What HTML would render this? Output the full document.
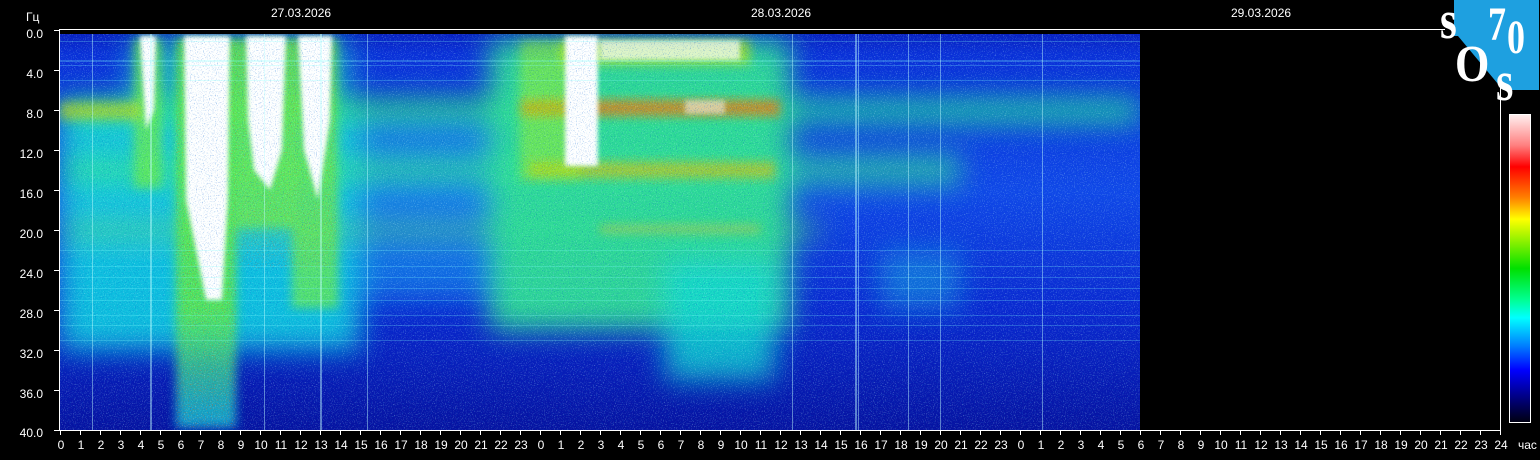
<!DOCTYPE html>
<html><head><meta charset="utf-8"><style>
html,body{margin:0;padding:0;background:#000;width:1540px;height:460px;overflow:hidden}
svg{display:block}
text{font-family:"Liberation Sans",sans-serif;fill:#fff}
.lg{font-family:"Liberation Serif",serif;font-weight:bold;fill:#fff}
</style></head><body>
<svg width="1540" height="460" viewBox="0 0 1540 460" xmlns="http://www.w3.org/2000/svg">
<defs>
<filter id="b2" x="-50%" y="-50%" width="200%" height="200%"><feGaussianBlur stdDeviation="2"/></filter>
<filter id="b5" x="-50%" y="-50%" width="200%" height="200%"><feGaussianBlur stdDeviation="5"/></filter>
<filter id="b12" x="-20%" y="-20%" width="140%" height="140%"><feGaussianBlur stdDeviation="14"/></filter>
<filter id="nz" x="0" y="0" width="100%" height="100%">
<feTurbulence type="fractalNoise" baseFrequency="0.9" numOctaves="1" seed="3"/>
<feColorMatrix type="matrix" values="0 0 0 0 0.6  0 0 0 0 1  0 0 0 0 1  4 0 0 0 -2.2"/>
</filter>
<filter id="nz2" x="0" y="0" width="100%" height="100%">
<feTurbulence type="fractalNoise" baseFrequency="0.85" numOctaves="1" seed="9"/>
<feColorMatrix type="matrix" values="0 0 0 0 0  0 0 0 0 0.1  0 0 0 0 0.6  4 0 0 0 -2.2"/>
</filter>
<filter id="nzr" x="0" y="0" width="100%" height="100%">
<feTurbulence type="fractalNoise" baseFrequency="0.95" numOctaves="1" seed="5"/>
<feColorMatrix type="matrix" values="0 0 0 0 0.9  0 0 0 0 0.1  0 0 0 0 0  5 0 0 0 -3"/>
</filter>
<clipPath id="pc"><rect x="60" y="34" width="1080" height="396"/></clipPath>
<linearGradient id="bg" x1="0" y1="0" x2="0" y2="1">
<stop offset="0" stop-color="#0820c0"/><stop offset="0.05" stop-color="#0a30d8"/>
<stop offset="0.4" stop-color="#1048e8"/><stop offset="0.7" stop-color="#0a28d0"/><stop offset="1" stop-color="#0612a0"/>
</linearGradient>
<linearGradient id="colg" x1="0" y1="0" x2="0" y2="1">
<stop offset="0" stop-color="#60f040"/><stop offset="0.7" stop-color="#60f040"/><stop offset="1" stop-color="#10c0e0"/>
</linearGradient>
<linearGradient id="cb" x1="0" y1="0" x2="0" y2="1">
<stop offset="0" stop-color="#fff0f0"/><stop offset="0.1" stop-color="#ff8080"/><stop offset="0.17" stop-color="#ff0000"/>
<stop offset="0.27" stop-color="#ff8000"/><stop offset="0.34" stop-color="#ffff00"/><stop offset="0.5" stop-color="#00e000"/>
<stop offset="0.6" stop-color="#00ff90"/><stop offset="0.66" stop-color="#00ffff"/><stop offset="0.75" stop-color="#0080ff"/>
<stop offset="0.83" stop-color="#0000ff"/><stop offset="0.92" stop-color="#000080"/><stop offset="1" stop-color="#000010"/>
</linearGradient>
</defs>
<g clip-path="url(#pc)">
<rect x="60" y="34" width="1080" height="396" fill="url(#bg)"/>
<g filter="url(#b12)">
<rect x="360" y="120" width="140" height="180" fill="#10a8f0" opacity="0.5"/>
<rect x="60" y="100" width="300" height="250" fill="#10d8e0" opacity="0.85"/>
<rect x="60" y="100" width="1080" height="22" fill="#30f070" opacity="0.85"/>
<rect x="800" y="100" width="340" height="22" fill="#20d0b0" opacity="0.6"/>
<rect x="60" y="155" width="900" height="30" fill="#30e890" opacity="0.7"/>
<rect x="60" y="222" width="760" height="16" fill="#50e060" opacity="0.6"/>
<rect x="490" y="40" width="300" height="290" fill="#30e890" opacity="0.9"/>
<rect x="665" y="260" width="110" height="120" fill="#10d8d0" opacity="0.8"/>
<rect x="880" y="250" width="80" height="60" fill="#10b0e0" opacity="0.5"/>
<rect x="130" y="40" width="220" height="60" fill="#20d0c0" opacity="0.7"/>
</g>
<g filter="url(#b5)">
<rect x="176" y="38" width="60" height="390" fill="url(#colg)" opacity="0.8"/>
<rect x="236" y="38" width="58" height="190" fill="#70f040" opacity="0.75"/>
<rect x="292" y="38" width="46" height="270" fill="#70f040" opacity="0.7"/>
<rect x="134" y="38" width="28" height="150" fill="#70f040" opacity="0.7"/>
<rect x="520" y="100" width="260" height="16" fill="#ff7000" opacity="0.7"/>
<rect x="530" y="162" width="245" height="16" fill="#e8c000" opacity="0.6"/>
<rect x="600" y="226" width="160" height="6" fill="#f0c020" opacity="0.6"/>
<rect x="560" y="40" width="190" height="25" fill="#d0f000" opacity="0.6"/>
<rect x="60" y="102" width="80" height="18" fill="#d0e000" opacity="0.6"/>
<rect x="520" y="40" width="60" height="140" fill="#a0f020" opacity="0.5"/>
</g>
<g clip-path="url(#pc)">
<rect x="176" y="38" width="60" height="390" filter="url(#nzr)" opacity="0.6"/>
<rect x="236" y="38" width="100" height="230" filter="url(#nzr)" opacity="0.5"/>
<rect x="520" y="95" width="260" height="25" filter="url(#nzr)" opacity="0.6"/>
<rect x="520" y="155" width="255" height="30" filter="url(#nzr)" opacity="0.4"/>
</g>
<g filter="url(#b2)" fill="#fff">
<polygon points="184,36 230,36 228,200 222,300 206,300 186,200"/>
<polygon points="246,36 286,36 282,150 270,190 254,170 248,120"/>
<polygon points="298,36 332,36 330,120 318,200 304,150"/>
<polygon points="140,36 156,36 154,110 146,130"/>
<rect x="565" y="36" width="33" height="130"/>
<rect x="600" y="40" width="140" height="20" opacity="0.7"/>
<rect x="685" y="100" width="40" height="14" opacity="0.5"/>
</g>
<rect x="60" y="34" width="1080" height="396" filter="url(#nz)" opacity="0.35"/>
<rect x="60" y="34" width="1080" height="396" filter="url(#nz2)" opacity="0.4"/>
<g fill="#80ffff" opacity="0.25">
<rect x="60" y="41" width="1080" height="1"/><rect x="60" y="60" width="1080" height="2"/><rect x="60" y="65" width="1080" height="1"/>
<rect x="60" y="80" width="1080" height="1"/><rect x="60" y="250" width="1080" height="1"/><rect x="60" y="266" width="1080" height="1"/>
<rect x="60" y="277" width="1080" height="1"/><rect x="60" y="288" width="1080" height="1"/><rect x="60" y="300" width="1080" height="1"/>
<rect x="60" y="315" width="1080" height="1"/><rect x="60" y="325" width="1080" height="1"/><rect x="60" y="340" width="1080" height="1"/>
</g>
<g fill="#c0ffff" opacity="0.45">
<rect x="150" y="34" width="2" height="396"/><rect x="264" y="34" width="1" height="396"/><rect x="320" y="34" width="2" height="396"/>
<rect x="855" y="34" width="2" height="396"/><rect x="858" y="34" width="1" height="396"/><rect x="792" y="34" width="1" height="396"/>
<rect x="940" y="34" width="1" height="396"/><rect x="908" y="34" width="1" height="396"/><rect x="1042" y="34" width="1" height="396"/>
<rect x="367" y="34" width="1" height="396"/><rect x="92" y="34" width="1" height="396"/>
</g>
</g>
<g stroke="#fff" stroke-width="1" fill="none">
<line x1="59" y1="29.5" x2="1445" y2="29.5"/>
<line x1="59.5" y1="29" x2="59.5" y2="430"/>
<line x1="59" y1="430.5" x2="1501" y2="430.5"/>
<line x1="1500.5" y1="85" x2="1500.5" y2="430"/>
<line x1="54" y1="30.5" x2="59" y2="30.5"/><line x1="54" y1="70.5" x2="59" y2="70.5"/><line x1="54" y1="110.5" x2="59" y2="110.5"/>
<line x1="54" y1="150.5" x2="59" y2="150.5"/><line x1="54" y1="190.5" x2="59" y2="190.5"/><line x1="54" y1="230.5" x2="59" y2="230.5"/>
<line x1="54" y1="270.5" x2="59" y2="270.5"/><line x1="54" y1="310.5" x2="59" y2="310.5"/><line x1="54" y1="350.5" x2="59" y2="350.5"/>
<line x1="54" y1="390.5" x2="59" y2="390.5"/><line x1="54" y1="430.5" x2="59" y2="430.5"/>
</g>
<path d="M60.5 430v5M80.5 430v5M100.5 430v5M120.5 430v5M140.5 430v5M160.5 430v5M180.5 430v5M200.5 430v5M220.5 430v5M240.5 430v5M260.5 430v5M280.5 430v5M300.5 430v5M320.5 430v5M340.5 430v5M360.5 430v5M380.5 430v5M400.5 430v5M420.5 430v5M440.5 430v5M460.5 430v5M480.5 430v5M500.5 430v5M520.5 430v5M540.5 430v5M560.5 430v5M580.5 430v5M600.5 430v5M620.5 430v5M640.5 430v5M660.5 430v5M680.5 430v5M700.5 430v5M720.5 430v5M740.5 430v5M760.5 430v5M780.5 430v5M800.5 430v5M820.5 430v5M840.5 430v5M860.5 430v5M880.5 430v5M900.5 430v5M920.5 430v5M940.5 430v5M960.5 430v5M980.5 430v5M1000.5 430v5M1020.5 430v5M1040.5 430v5M1060.5 430v5M1080.5 430v5M1100.5 430v5M1120.5 430v5M1140.5 430v5M1160.5 430v5M1180.5 430v5M1200.5 430v5M1220.5 430v5M1240.5 430v5M1260.5 430v5M1280.5 430v5M1300.5 430v5M1320.5 430v5M1340.5 430v5M1360.5 430v5M1380.5 430v5M1400.5 430v5M1420.5 430v5M1440.5 430v5M1460.5 430v5M1480.5 430v5M1500.5 430v5" stroke="#fff"/>
<g font-size="12" text-anchor="end">
<text x="43" y="38">0.0</text><text x="43" y="78">4.0</text><text x="43" y="118">8.0</text><text x="43" y="158">12.0</text>
<text x="43" y="198">16.0</text><text x="43" y="238">20.0</text><text x="43" y="278">24.0</text><text x="43" y="318">28.0</text>
<text x="43" y="358">32.0</text><text x="43" y="398">36.0</text><text x="43" y="437">40.0</text>
</g>
<text x="26" y="21" font-size="12">Гц</text>
<g font-size="12"><text x="271" y="17">27.03.2026</text><text x="751" y="17">28.03.2026</text><text x="1231" y="17">29.03.2026</text></g>
<g font-size="12" text-anchor="middle">
<text x="61" y="449">0</text><text x="81" y="449">1</text><text x="101" y="449">2</text><text x="121" y="449">3</text><text x="141" y="449">4</text><text x="161" y="449">5</text><text x="181" y="449">6</text><text x="201" y="449">7</text><text x="221" y="449">8</text><text x="241" y="449">9</text><text x="261" y="449">10</text><text x="281" y="449">11</text><text x="301" y="449">12</text><text x="321" y="449">13</text><text x="341" y="449">14</text><text x="361" y="449">15</text><text x="381" y="449">16</text><text x="401" y="449">17</text><text x="421" y="449">18</text><text x="441" y="449">19</text><text x="461" y="449">20</text><text x="481" y="449">21</text><text x="501" y="449">22</text><text x="521" y="449">23</text>
<text x="541" y="449">0</text><text x="561" y="449">1</text><text x="581" y="449">2</text><text x="601" y="449">3</text><text x="621" y="449">4</text><text x="641" y="449">5</text><text x="661" y="449">6</text><text x="681" y="449">7</text><text x="701" y="449">8</text><text x="721" y="449">9</text><text x="741" y="449">10</text><text x="761" y="449">11</text><text x="781" y="449">12</text><text x="801" y="449">13</text><text x="821" y="449">14</text><text x="841" y="449">15</text><text x="861" y="449">16</text><text x="881" y="449">17</text><text x="901" y="449">18</text><text x="921" y="449">19</text><text x="941" y="449">20</text><text x="961" y="449">21</text><text x="981" y="449">22</text><text x="1001" y="449">23</text>
<text x="1021" y="449">0</text><text x="1041" y="449">1</text><text x="1061" y="449">2</text><text x="1081" y="449">3</text><text x="1101" y="449">4</text><text x="1121" y="449">5</text><text x="1141" y="449">6</text><text x="1161" y="449">7</text><text x="1181" y="449">8</text><text x="1201" y="449">9</text><text x="1221" y="449">10</text><text x="1241" y="449">11</text><text x="1261" y="449">12</text><text x="1281" y="449">13</text><text x="1301" y="449">14</text><text x="1321" y="449">15</text><text x="1341" y="449">16</text><text x="1361" y="449">17</text><text x="1381" y="449">18</text><text x="1401" y="449">19</text><text x="1421" y="449">20</text><text x="1441" y="449">21</text><text x="1461" y="449">22</text><text x="1481" y="449">23</text><text x="1501" y="449">24</text>
</g>
<text x="1518" y="449" font-size="12">час</text>
<rect x="1509.5" y="114.5" width="21" height="308" fill="url(#cb)" stroke="#fff"/>
<polygon points="1454,0 1539,0 1539,90 1503,90 1458,36 1454,36" fill="#1ea0e0"/>
<g class="lg">
<text class="lg" x="0" y="0" font-size="54" transform="translate(1440,38) scale(0.8,1)">s</text>
<text class="lg" x="0" y="0" font-size="48" transform="translate(1488,40) scale(0.75,1)">7</text>
<text class="lg" x="0" y="0" font-size="48" transform="translate(1507,53) scale(0.75,1)">0</text>
<text class="lg" x="0" y="0" font-size="52" transform="translate(1455,81) scale(0.85,1)">O</text>
<text class="lg" x="0" y="0" font-size="56" transform="translate(1496,100) scale(0.8,1)">s</text>
</g>
</svg>
</body></html>
